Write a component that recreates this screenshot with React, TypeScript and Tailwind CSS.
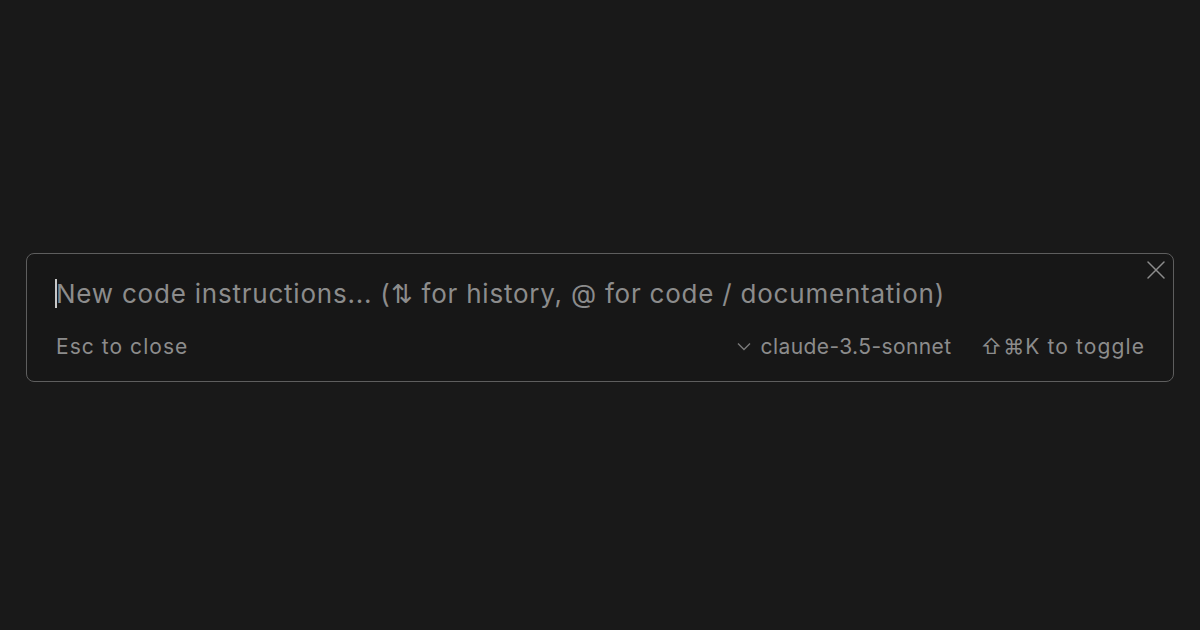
import React from "react";

export default function App() {
  return (
    <div className="w-[1200px] h-[630px] bg-[#191919] flex flex-col pt-[253px] px-[26px]" style={{ fontFamily: "Inter, 'Noto Sans', sans-serif" }}>
      <div className="relative w-[1148px] h-[129px] rounded-[8px] border border-[#5e5e5e] bg-[#171717] flex flex-col pl-[29px] pr-[28px]">
        <button className="absolute right-[7px] top-[6px] text-[#8c8c8c]">
          <svg width="20" height="20" viewBox="0 0 20 20" fill="none" stroke="currentColor" strokeWidth="1.5" strokeLinecap="round">
            <path d="M2 2L18 18M18 2L2 18" />
          </svg>
        </button>
        <div className="flex items-center h-[29px] mt-[25px]">
          <span className="w-[2px] h-[29px] bg-[#c8c8c8] -ml-[1px] shrink-0" />
          <span className="text-[26px] text-[#8c8c8c] tracking-[0.78px] -ml-[1px] leading-none whitespace-nowrap">
            New code instructions... (⇅ for history, @ for code / documentation)
          </span>
        </div>
        <div className="flex items-center mt-[28px] text-[21px] text-[#8c8c8c] leading-none whitespace-nowrap">
          <span className="tracking-[1.05px]">Esc to close</span>
          <div className="ml-auto flex items-center">
            <svg width="14" height="9" viewBox="0 0 14 9" fill="none" stroke="#7a7a7a" strokeWidth="1.4">
              <path d="M1 1.5L7 7.5L13 1.5" />
            </svg>
            <span className="ml-[10px] tracking-[0.4px]">claude-3.5-sonnet</span>
            <span className="ml-[29px] tracking-[1.1px]">⇧⌘K to toggle</span>
          </div>
        </div>
      </div>
    </div>
  );
}
